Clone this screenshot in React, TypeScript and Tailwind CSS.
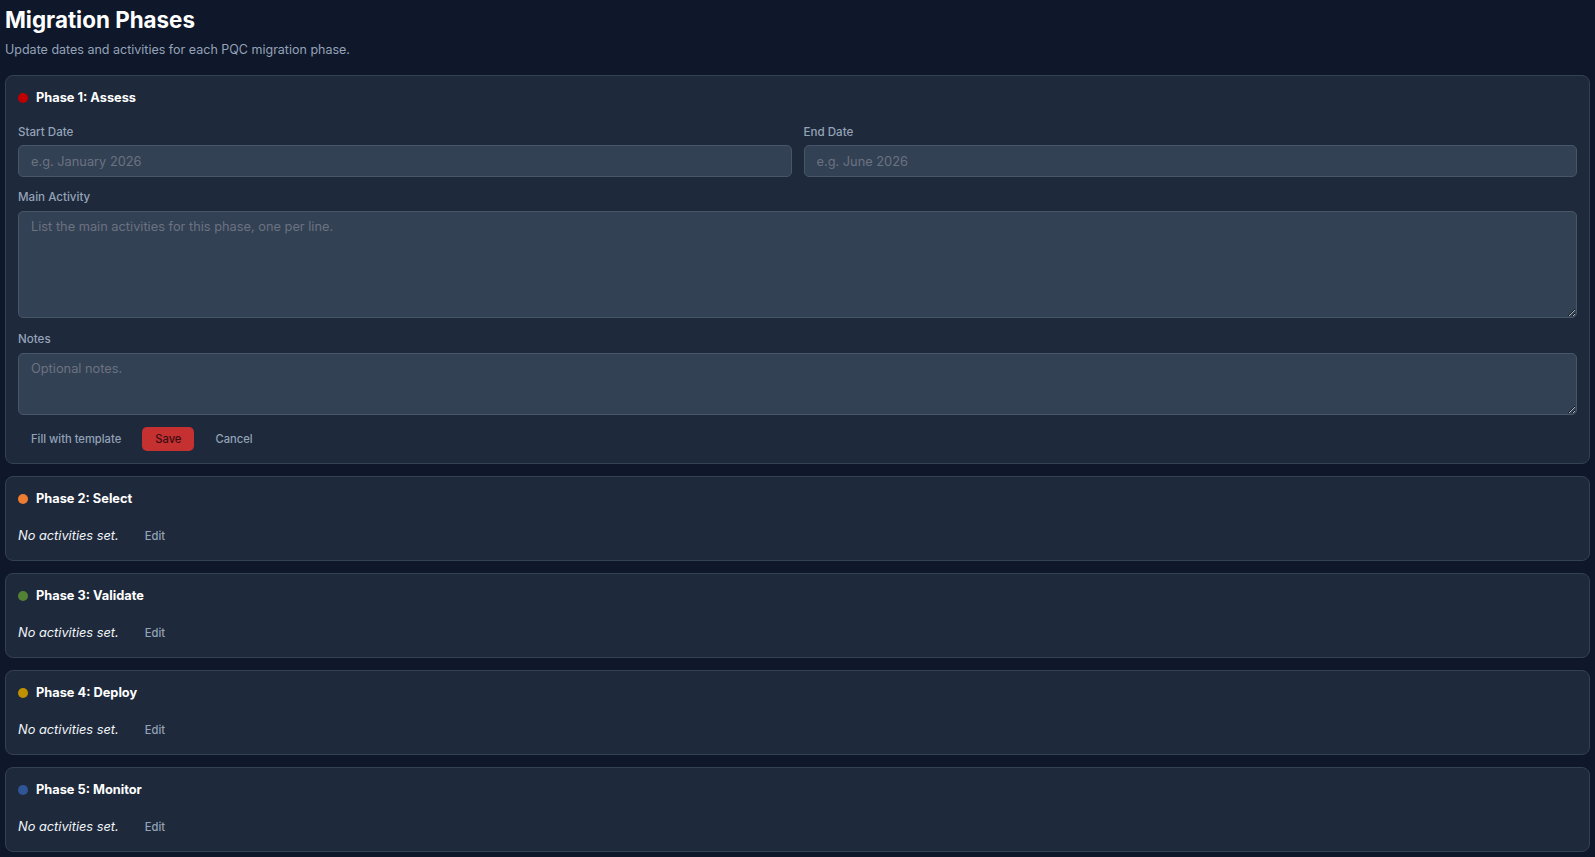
import { useState } from 'react';

type Phase = {
  id: number;
  name: string;
  color: string;
};

const phases: Phase[] = [
  { id: 1, name: 'Phase 1: Assess', color: 'bg-[#c00000]' },
  { id: 2, name: 'Phase 2: Select', color: 'bg-[#ed7d31]' },
  { id: 3, name: 'Phase 3: Validate', color: 'bg-[#548235]' },
  { id: 4, name: 'Phase 4: Deploy', color: 'bg-[#bf9000]' },
  { id: 5, name: 'Phase 5: Monitor', color: 'bg-[#2f5597]' },
];

const fieldClass =
  'w-full rounded-[5px] border border-[#475569] bg-[#334155] px-3 text-[12.8px] text-slate-100 placeholder:text-[#6b7280] outline-none focus:border-slate-400';

const labelClass = 'block text-[11.6px] leading-4 font-medium text-[#94a3b8]';

function PhaseHeader({ phase }: { phase: Phase }) {
  return (
    <div className="flex h-5 items-center gap-2">
      <span className={`h-2.5 w-2.5 rounded-full ${phase.color}`} />
      <h3 className="text-[12.8px] font-bold text-white">{phase.name}</h3>
    </div>
  );
}

function PhaseEditor({ phase, onClose }: { phase: Phase; onClose: () => void }) {
  return (
    <div className="rounded-lg border border-[#334155] bg-[#1e293b] p-3">
      <PhaseHeader phase={phase} />
      <div className="mt-4 grid grid-cols-2 gap-3">
        <label className="block">
          <span className={`${labelClass} mb-[5px]`}>Start Date</span>
          <input className={`${fieldClass} h-8`} placeholder="e.g. January 2026" />
        </label>
        <label className="block">
          <span className={`${labelClass} mb-[5px]`}>End Date</span>
          <input className={`${fieldClass} h-8`} placeholder="e.g. June 2026" />
        </label>
      </div>
      <label className="mt-3 block">
        <span className={`${labelClass} mb-1.5`}>Main Activity</span>
        <textarea
          className={`${fieldClass} block h-[107px] pt-[5px] pb-2 leading-5`}
          placeholder="List the main activities for this phase, one per line."
        />
      </label>
      <label className="mt-[13px] block">
        <span className={`${labelClass} mb-1.5`}>Notes</span>
        <textarea
          className={`${fieldClass} block h-[62px] pt-[5px] pb-2 leading-5`}
          placeholder="Optional notes."
        />
      </label>
      <div className="mt-3 flex items-center gap-2">
        <button className="h-6 rounded-[5px] px-[13px] text-[11.2px] font-medium text-[#94a3b8] hover:text-white">
          Fill with template
        </button>
        <button className="h-6 rounded-[5px] bg-[#c53030] px-[13px] text-[11.2px] font-medium text-[#3b0d12]">
          Save
        </button>
        <button
          onClick={onClose}
          className="h-6 rounded-[5px] px-[13px] text-[11.2px] font-medium text-[#94a3b8] hover:text-white"
        >
          Cancel
        </button>
      </div>
    </div>
  );
}

function PhaseSummary({ phase, onEdit }: { phase: Phase; onEdit: () => void }) {
  return (
    <div className="rounded-lg border border-[#334155] bg-[#1e293b] p-3">
      <PhaseHeader phase={phase} />
      <div className="mt-[15px] flex h-6 items-center">
        <p className="text-[12.8px] text-[#f1f5f9] italic">No activities set.</p>
        <button
          onClick={onEdit}
          className="ml-[14px] px-3 text-[11.2px] font-medium text-[#94a3b8] hover:text-white"
        >
          Edit
        </button>
      </div>
    </div>
  );
}

export default function App() {
  const [editing, setEditing] = useState<number | null>(1);

  return (
    <div
      className="min-h-screen bg-[#0f172a] px-[5px] pt-1 pb-2"
      style={{ fontFamily: 'Inter, "Noto Sans", sans-serif' }}
    >
      <h1 className="text-[22.4px] leading-8 font-bold text-white">Migration Phases</h1>
      <p className="mt-1 text-[12.5px] leading-5 text-[#94a3b8]">
        Update dates and activities for each PQC migration phase.
      </p>
      <div className="mt-[15px] space-y-3">
        {phases.map((phase) =>
          editing === phase.id ? (
            <PhaseEditor key={phase.id} phase={phase} onClose={() => setEditing(null)} />
          ) : (
            <PhaseSummary key={phase.id} phase={phase} onEdit={() => setEditing(phase.id)} />
          ),
        )}
      </div>
    </div>
  );
}
